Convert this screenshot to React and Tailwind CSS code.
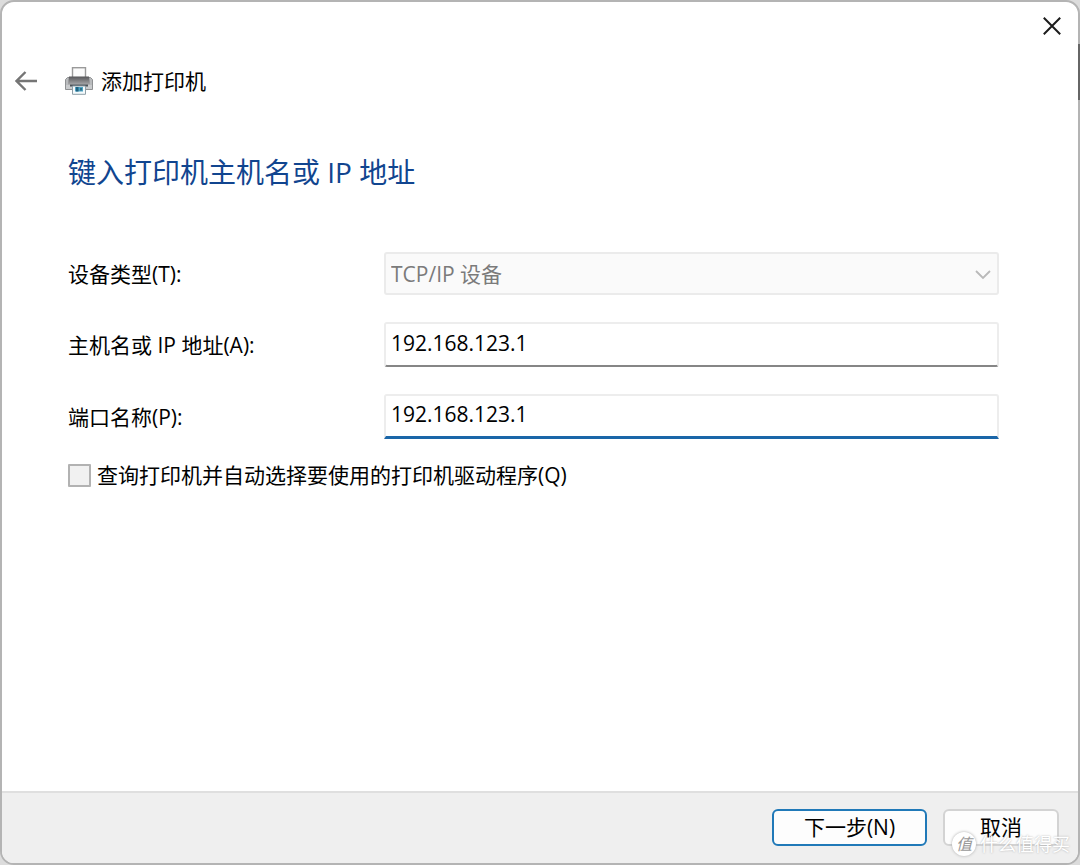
import React, { useState } from "react";

const PrinterIcon = () => (
  <svg width="28" height="28" viewBox="0 0 28 28" aria-hidden="true">
    <defs>
      <linearGradient id="printer-body" x1="0" y1="0" x2="0" y2="1">
        <stop offset="0" stopColor="#555558" />
        <stop offset="1" stopColor="#a6a6a8" />
      </linearGradient>
    </defs>
    <rect x="7.5" y="0.7" width="13" height="12" fill="#fbfbfb" stroke="#9a9a9a" strokeWidth="1.4" />
    <path d="M0.5 12.5 2.5 10.5H25.5L27.5 12.5V22.5H0.5Z" fill="#b9bbbd" stroke="#8f9193" />
    <path d="M4 9.5H24L25 17.5H3Z" fill="url(#printer-body)" />
    <path d="M1 18H27V22H1Z" fill="#c9cbcd" />
    <path d="M5 17.5H23V19.5H5Z" fill="#4c5358" />
    <path d="M7.5 19H20.5V27.3H7.5Z" fill="#f4fafc" stroke="#8e9fa8" />
    <path d="M10 20H18V24.5H10Z" fill="#4fa3c4" />
    <path d="M11 20H13.5V24.5H11Z" fill="#23627f" />
    <path d="M15 21H17V23.5H15Z" fill="#2d7189" />
  </svg>
);

const Watermark = () => (
  <div
    aria-hidden="true"
    className="pointer-events-none absolute right-[10px] bottom-[9px] flex items-center gap-1 text-white [text-shadow:0_0_2px_#aaaaaa]"
  >
    <span className="flex size-6 items-center justify-center rounded-full bg-white text-base text-[#999999] italic shadow-[0_0_3px_#aaaaaa] [text-shadow:none]">
      值
    </span>
    <span className="text-lg leading-6">什么值得买</span>
  </div>
);

const fieldClass =
  "h-[45px] w-full rounded-[3px] border-2 border-[#ededed] bg-white px-[5px] pb-1 text-black outline-none";

const App = () => {
  const [host, setHost] = useState("192.168.123.1");
  const [port, setPort] = useState("192.168.123.1");
  const [query, setQuery] = useState(false);

  return (
    <div className="relative flex min-h-screen flex-col bg-[#dcdcdc] font-['Open_Sans','Noto_Sans_CJK_SC',sans-serif] text-[21px] leading-7 text-black">
      <div className="flex flex-1 flex-col overflow-hidden rounded-[14px] border-2 border-[#b4b4b4] bg-white">
        <header>
          <div className="flex h-12 items-center justify-end pr-[15px]">
            <button type="button" aria-label="关闭" className="p-[2px]">
              <svg width="18" height="18" viewBox="0 0 18 18" fill="none" stroke="#1c1c1c" strokeWidth="2">
                <path d="M0.8 0.8 17.2 17.2M17.2 0.8 0.8 17.2" />
              </svg>
            </button>
          </div>

          <div className="flex h-[62px] items-center pl-[13px]">
            <button type="button" aria-label="返回">
              <svg width="22" height="20" viewBox="0 0 22 20" fill="none" stroke="#757575" strokeWidth="2.4">
                <path d="M10.5 1 1.5 10 10.5 19M1.5 10H22" />
              </svg>
            </button>
            <div className="ml-7 flex items-center gap-2">
              <PrinterIcon />
              <span>添加打印机</span>
            </div>
          </div>
        </header>

        <main className="flex-1 pr-[79px] pl-[66px]">
          <h1 className="mt-10 text-[28px] leading-10 text-[#11458f]">键入打印机主机名或 IP 地址</h1>

          <form className="mt-[60px]">
            <div className="grid grid-cols-[316px_1fr] items-center gap-y-[27px]">
              <label htmlFor="device-type">设备类型(T):</label>
              <div className="relative">
                <select
                  id="device-type"
                  disabled
                  className="block h-[43px] w-full appearance-none rounded-[3px] border-2 border-[#ebebeb] bg-[#fafafa] px-[5px] text-[#7b7b7b] opacity-100"
                >
                  <option>TCP/IP 设备</option>
                </select>
                <svg
                  className="pointer-events-none absolute top-[18px] right-2"
                  width="16"
                  height="10"
                  viewBox="0 0 16 10"
                  fill="none"
                  stroke="#b9b9b9"
                  strokeWidth="1.8"
                >
                  <path d="M1 1 8 8 15 1" />
                </svg>
              </div>

              <label htmlFor="host">主机名或 IP 地址(A):</label>
              <input
                id="host"
                type="text"
                value={host}
                onChange={(e) => setHost(e.target.value)}
                className={`${fieldClass} border-b-[#868686]`}
              />

              <label htmlFor="port">端口名称(P):</label>
              <input
                id="port"
                type="text"
                value={port}
                onChange={(e) => setPort(e.target.value)}
                className={`${fieldClass} rounded-b-none border-b-3 border-b-[#1a66a8]`}
              />
            </div>

            <label className="mt-[22px] flex items-center gap-[6px]">
              <input
                type="checkbox"
                checked={query}
                onChange={(e) => setQuery(e.target.checked)}
                className="size-[23px] appearance-none rounded-[1px] border-2 border-[#b2b2b2] bg-[#f1f1f1] checked:bg-[#1a66a8]"
              />
              查询打印机并自动选择要使用的打印机驱动程序(Q)
            </label>
          </form>
        </main>

        <footer className="flex justify-end gap-4 border-t-2 border-[#dfdfdf] bg-[#efefef] pt-4 pr-[19px] pb-[17px]">
          <button
            type="button"
            className="h-[37px] w-[155px] rounded-md border-2 border-[#2079b8] bg-[#fdfdfd] pb-[2px]"
          >
            下一步(N)
          </button>
          <button
            type="button"
            className="h-[37px] w-[116px] rounded-md border-2 border-[#d3d3d3] bg-[#fdfdfd] pb-[2px]"
          >
            取消
          </button>
        </footer>
      </div>

      {/* sliver of the window behind */}
      <div className="absolute top-11 right-0 h-14 w-[2px] bg-[#666666]" />
      <Watermark />
    </div>
  );
};

export default App;
